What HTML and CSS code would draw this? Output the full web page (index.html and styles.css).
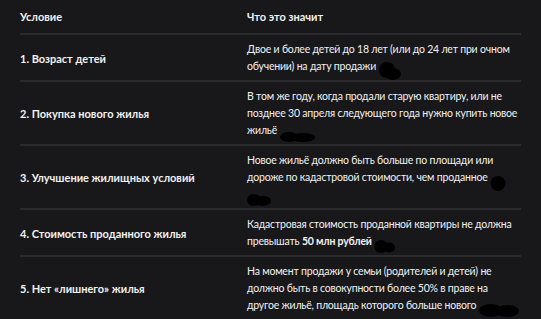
FILE: index.html
```html
<!DOCTYPE html>
<html lang="ru">
<head>
<meta charset="utf-8">
<link rel="stylesheet" href="styles.css">
</head>
<body>
<div class="wrap">
  <div class="table">
    <div class="row head">
      <div class="c1">Условие</div>
      <div class="c2">Что это значит</div>
    </div>
    <div class="row">
      <div class="c1">1. Возраст детей</div>
      <div class="c2">Двое и более детей до 18 лет (или до 24 лет при очном обучении) на дату продажи <svg class="blob tall" width="22" height="18" viewBox="0 0 22 18"><ellipse cx="8" cy="8" rx="8" ry="8"/><ellipse cx="14" cy="12" rx="8" ry="6"/></svg></div>
    </div>
    <div class="row">
      <div class="c1">2. Покупка нового жилья</div>
      <div class="c2">В том же году, когда продали старую квартиру, или не позднее 30 апреля следующего года нужно купить новое жильё <svg class="blob" width="35" height="10" viewBox="0 0 35 10"><ellipse cx="9" cy="5" rx="9" ry="5"/><ellipse cx="23" cy="5.5" rx="12" ry="4.5"/></svg></div>
    </div>
    <div class="row">
      <div class="c1">3. Улучшение жилищных условий</div>
      <div class="c2">Новое жильё должно быть больше по площади или дороже по кадастровой стоимости, чем проданное <svg class="blob tall" width="16" height="15" viewBox="0 0 16 15"><ellipse cx="8" cy="7.5" rx="7.5" ry="7.5"/></svg> <svg class="blob" width="24" height="12" viewBox="0 0 24 12"><ellipse cx="7" cy="6" rx="7" ry="6"/><ellipse cx="16" cy="7" rx="8" ry="5"/></svg></div>
    </div>
    <div class="row">
      <div class="c1">4. Стоимость проданного жилья</div>
      <div class="c2">Кадастровая стоимость проданной квартиры не должна превышать <b>50 млн рублей</b> <svg class="blob" width="21" height="13" viewBox="0 0 21 13"><ellipse cx="7" cy="6.5" rx="7" ry="6.5"/><ellipse cx="15" cy="7.5" rx="6" ry="5"/></svg></div>
    </div>
    <div class="row">
      <div class="c1">5. Нет «лишнего» жилья</div>
      <div class="c2">На момент продажи у семьи (родителей и детей) не должно быть в совокупности более 50% в праве на другое жильё, площадь которого больше нового <svg class="blob" width="40" height="13" viewBox="0 0 40 13"><ellipse cx="12" cy="6.5" rx="12" ry="6.5"/><ellipse cx="28" cy="7" rx="12" ry="6"/></svg></div>
    </div>
  </div>
</div>
</body>
</html>
```
FILE: styles.css
```css
html, body {
  margin: 0;
  padding: 0;
  background: #18181b;
}
body {
  font-family: Lato, "Noto Sans", sans-serif;
  font-size: 11px;
  line-height: 17px;
  color: #f2f2f2;
}
.wrap {
  padding: 0 20px;
}
.table {
  width: 501px;
}
.row {
  display: grid;
  grid-template-columns: 227px 1fr;
  align-items: center;
  border-bottom: 2px solid #2b2b2f;
  padding: 6px 0 5px;
}
.row.head {
  padding: 8px 0 8px;
}
.c1 {
  font-weight: 700;
}
.c2 {
  padding-right: 2px;
  font-size: 10.5px;
  letter-spacing: -0.2px;
}
.head .c2 {
  font-size: 11px;
  letter-spacing: 0;
  font-weight: 700;
}
.c2 b {
  font-weight: 700;
}
.blob {
  fill: #000;
  vertical-align: -2px;
  margin: -6px 0;
}
.blob.tall {
  vertical-align: -4px;
}
```
